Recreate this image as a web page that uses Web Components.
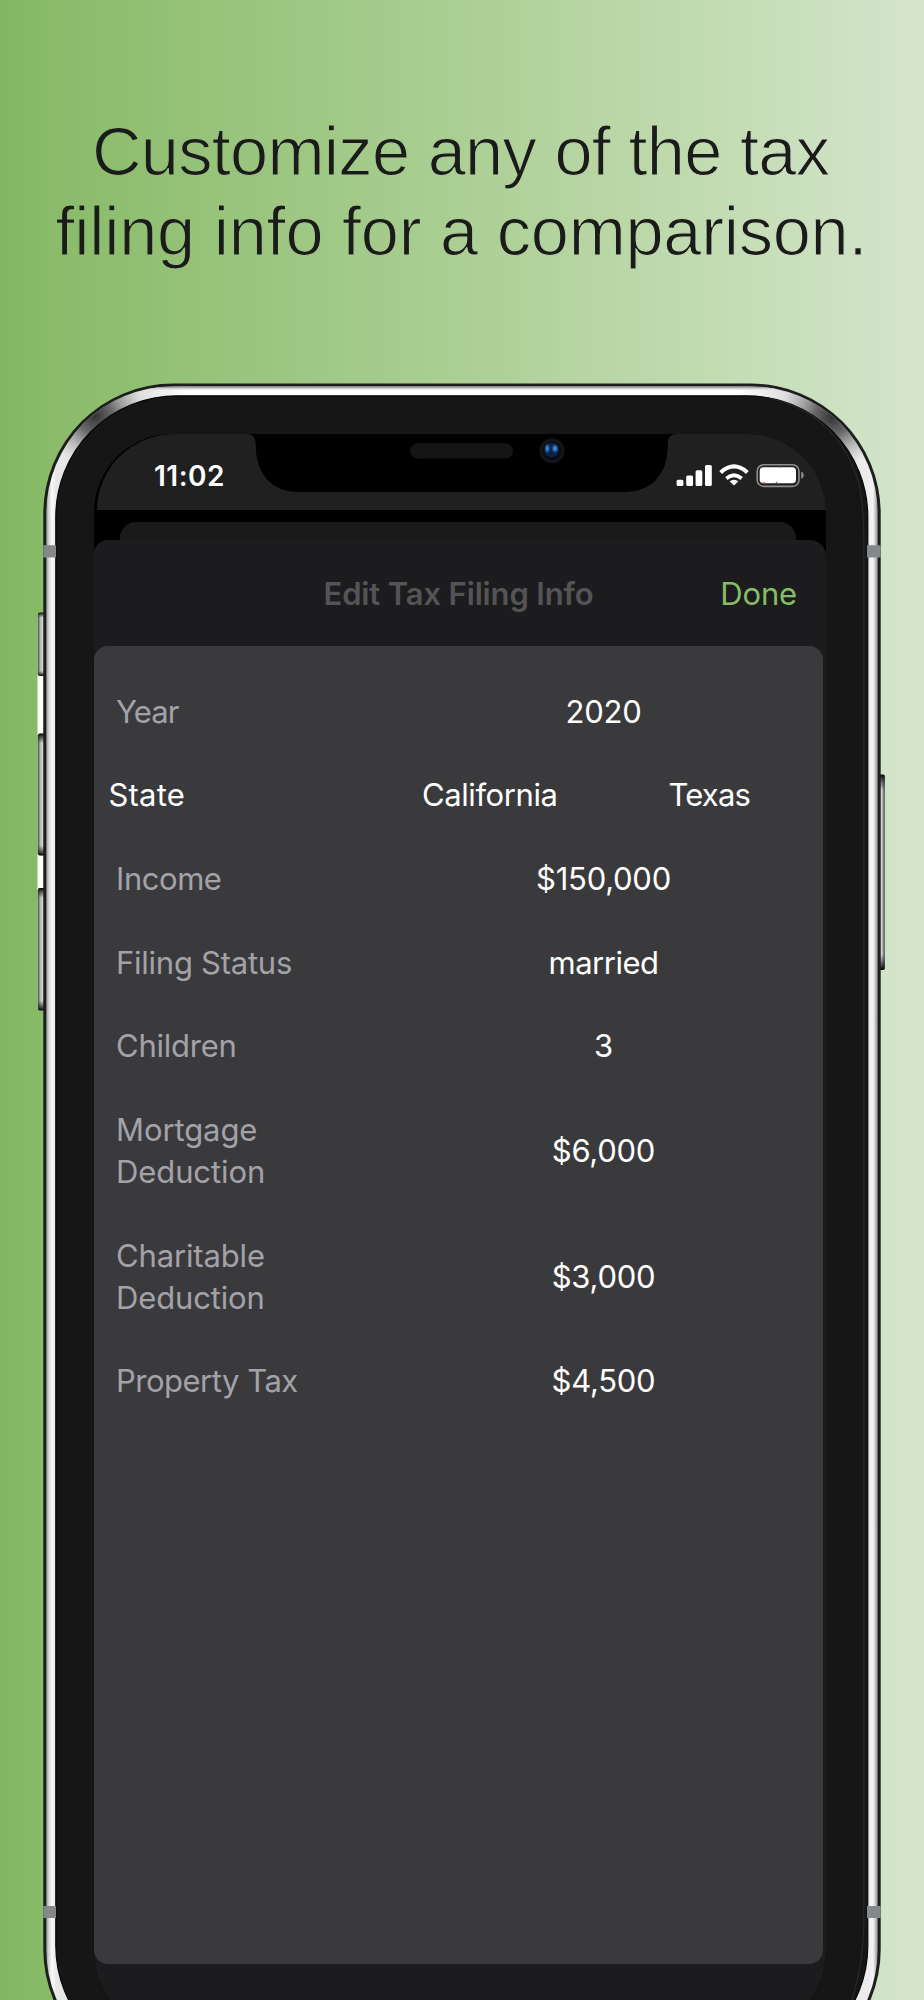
<!DOCTYPE html>
<html lang="en">
<head>
<meta charset="utf-8">
<title>Edit Tax Filing Info</title>
<style>
html,body{margin:0;padding:0}
body{width:924px;height:2000px;overflow:hidden;font-family:Inter,"Liberation Sans",sans-serif}
</style>
</head>
<body>
<promo-page>
  <promo-headline slot="headline"></promo-headline>
  <phone-frame>
    <status-bar time="11:02"></status-bar>
    <modal-sheet heading="Edit Tax Filing Info" action="Done">
      <info-row><span slot="label" style="letter-spacing:-.9px">Year</span><span>2020</span></info-row>
      <info-row strong><span slot="label" style="letter-spacing:.2px">State</span><span style="letter-spacing:-.4px">California</span><span style="letter-spacing:-.8px">Texas</span></info-row>
      <info-row><span slot="label" style="letter-spacing:-.45px">Income</span><span>$150,000</span></info-row>
      <info-row><span slot="label">Filing Status</span><span style="letter-spacing:-.5px">married</span></info-row>
      <info-row><span slot="label">Children</span><span>3</span></info-row>
      <info-row><span slot="label" style="letter-spacing:-.1px">Mortgage<br>Deduction</span><span>$6,000</span></info-row>
      <info-row><span slot="label" style="letter-spacing:-.15px">Charitable<br>Deduction</span><span>$3,000</span></info-row>
      <info-row><span slot="label" style="letter-spacing:-.5px">Property Tax</span><span>$4,500</span></info-row>
    </modal-sheet>
  </phone-frame>
</promo-page>

<script>
const define = (name, html, setup) => customElements.define(name, class extends HTMLElement {
  constructor() {
    super();
    this.attachShadow({mode: 'open'}).innerHTML = html;
  }
  connectedCallback() { if (setup) setup(this, this.shadowRoot); }
});

define('promo-page', `
<style>
:host{display:flex;flex-direction:column;width:924px;height:2000px;overflow:hidden;
 background:linear-gradient(90deg,#81b660 0%,#89bb69 5%,#abcf94 50%,#c5ddb5 80%,#d5e5cc 100%)}
</style>
<slot name="headline"></slot><slot></slot>`);

/* The outline uses the page gradient, which slims the letters to a light weight. */
define('promo-headline', `
<style>
:host{display:block;height:383px;flex:none}
svg{display:block}
text{font:400 68.500px "Liberation Sans",Arial,sans-serif;fill:#1b1b1b;stroke:url(#page);stroke-width:1.200}
</style>
<svg width="924" height="383">
 <defs><linearGradient id="page" gradientUnits="userSpaceOnUse" x1="0" y1="0" x2="924" y2="0">
  <stop offset="0" stop-color="#81b660"/><stop offset=".05" stop-color="#89bb69"/><stop offset=".5" stop-color="#abcf94"/><stop offset=".8" stop-color="#c5ddb5"/><stop offset="1" stop-color="#d5e5cc"/>
 </linearGradient></defs>
 <text x="92" y="174.500" textLength="738">Customize any of the tax</text>
 <text x="55.500" y="255" textLength="812">filing info for a comparison.</text>
</svg>`);

define('phone-frame', `
<style>
:host{display:flow-root;position:relative;height:1617px;flex:none}
.shell{position:absolute;left:0;top:0;display:block}
.screen{position:relative;margin:51px 0 0 94px;width:732px;height:1596px;border-radius:78px;background:#000;overflow:hidden;display:flex;flex-direction:column}
</style>
<svg class="shell" width="924" height="1617" viewBox="0 383 924 1617">
 <defs>
  <linearGradient id="metal" gradientUnits="userSpaceOnUse" x1="46" x2="878" y1="0" y2="0">
   <stop offset="0" stop-color="#8e8e8e"/><stop offset=".003" stop-color="#cfcfcf"/><stop offset=".007" stop-color="#fafafa"/><stop offset=".012" stop-color="#e8e8e8"/>
   <stop offset=".1" stop-color="#d8d8d8"/><stop offset=".17" stop-color="#fff"/><stop offset=".83" stop-color="#fff"/><stop offset=".9" stop-color="#d8d8d8"/>
   <stop offset=".989" stop-color="#ededed"/><stop offset=".994" stop-color="#f4f4f4"/><stop offset=".997" stop-color="#c4c4c4"/><stop offset="1" stop-color="#808080"/>
  </linearGradient>
  <linearGradient id="topline" x1="0" x2="0" y1="0" y2="1"><stop offset="0" stop-color="#777"/><stop offset=".5" stop-color="#d0d0d0"/><stop offset="1" stop-color="#d0d0d0" stop-opacity="0"/></linearGradient>
  <radialGradient id="shade"><stop offset="0" stop-color="#333"/><stop offset=".35" stop-color="#555" stop-opacity=".85"/><stop offset="1" stop-color="#999" stop-opacity="0"/></radialGradient>
  <linearGradient id="key" x1="0" x2="1" y1="0" y2="0"><stop offset="0" stop-color="#555"/><stop offset=".3" stop-color="#b5b5b5"/><stop offset=".6" stop-color="#d8d8d8"/><stop offset="1" stop-color="#444"/></linearGradient>
  <linearGradient id="ends" gradientUnits="objectBoundingBox" x1="0" x2="0" y1="0" y2="1"><stop offset="0" stop-color="#000"/><stop offset=".03" stop-color="#222" stop-opacity=".7"/><stop offset=".08" stop-color="#222" stop-opacity="0"/><stop offset=".92" stop-color="#222" stop-opacity="0"/><stop offset=".97" stop-color="#222" stop-opacity=".7"/><stop offset="1" stop-color="#000"/></linearGradient>
  <clipPath id="rim"><rect x="46.300" y="386.400" width="831.400" height="1690" rx="127"/></clipPath>
 </defs>
 <rect x="37.500" y="675" width="6" height="60" fill="#fff"/><rect x="37.500" y="854" width="6" height="36" fill="#fff"/>
 <g fill="url(#key)"><rect x="38" y="612.500" width="8" height="63.500" rx="2"/><rect x="38" y="733.500" width="8" height="122" rx="2"/><rect x="38" y="888" width="8" height="122.500" rx="2"/><rect x="877" y="774.500" width="7.800" height="195.500" rx="2"/></g>
 <g fill="url(#ends)"><rect x="38" y="612.500" width="8" height="63.500" rx="2"/><rect x="38" y="733.500" width="8" height="122" rx="2"/><rect x="38" y="888" width="8" height="122.500" rx="2"/><rect x="877" y="774.500" width="7.800" height="195.500" rx="2"/></g>
 <rect x="43.300" y="383.500" width="837.400" height="1696" rx="130" fill="#1c1f1c"/>
 <g clip-path="url(#rim)">
  <rect x="46" y="386" width="832" height="1692" fill="url(#metal)"/>
  <rect x="150" y="386.400" width="624" height="4" fill="url(#topline)"/>
  <circle cx="95" cy="416" r="50" fill="url(#shade)"/><circle cx="832" cy="417" r="52" fill="url(#shade)"/>
 </g>
 <rect x="55.800" y="395.800" width="812" height="1671" rx="121" fill="#161616" stroke="#070707" stroke-width="1.200"/>
 <path d="M770 398.500Q835 412 858 480Q863.800 500 863.800 540V1925Q863 1965 852 2000" fill="none" stroke="#292929" stroke-width="1.200"/>
 <g fill="#85888b"><rect x="43.300" y="545.200" width="12.700" height="12.300"/><rect x="867" y="545.200" width="13.700" height="12.300"/><rect x="43.300" y="1906" width="12.700" height="12"/><rect x="867" y="1906" width="13.700" height="12"/></g>
</svg>
<div class="screen"><slot></slot></div>`);

define('status-bar', `
<style>
:host{display:block;position:relative;margin-left:3px;height:75.500px;flex:none;background:#202020;border-radius:80px 77px 0 0/78px 78px 0 0}
svg{position:absolute;left:-3px;top:0;display:block}
.row{display:flex;padding:25px 0 0 57px;font:600 28px/34px Inter,sans-serif;letter-spacing:.5px;color:#fff;height:34px}
</style>
<svg width="732" height="76" viewBox="94 434 732 76">
 <defs><radialGradient id="ring"><stop offset="0" stop-color="#030712"/><stop offset=".6" stop-color="#080a10"/><stop offset=".85" stop-color="#15171a"/><stop offset="1" stop-color="#070707"/></radialGradient>
 <radialGradient id="glow"><stop offset="0" stop-color="#4a9be0"/><stop offset=".5" stop-color="#2468ae"/><stop offset="1" stop-color="#123666" stop-opacity="0"/></radialGradient></defs>
 <path d="M247 434C253 434.500 255.700 437 255.700 445C255.700 476 274 492 298 492H625C650 492 667.700 476 667.700 445C667.700 437 670.500 434.500 677 434Z" fill="#000"/>
 <rect x="410" y="443.300" width="103" height="15.200" rx="7.600" fill="#151515"/>
 <circle cx="552" cy="450.800" r="13" fill="url(#ring)"/>
 <circle cx="551.500" cy="450" r="7.300" fill="#0d2248"/>
 <ellipse cx="547.300" cy="448.500" rx="3" ry="5.500" fill="url(#glow)"/><ellipse cx="555" cy="448.500" rx="4" ry="5" fill="url(#glow)"/>
 <g fill="#fff">
  <rect x="676.600" y="479.700" width="6.800" height="6.300" rx="1.500"/><rect x="686.200" y="475.400" width="6.800" height="10.600" rx="1.500"/><rect x="695.600" y="470.200" width="6.700" height="15.800" rx="1.500"/><rect x="705" y="465" width="6.800" height="21" rx="1.500"/>
  <path d="M734 485.500L729.600 481.300Q734 478.300 738.400 481.300Z"/>
 </g>
 <path d="M726.300 478.400Q734 472.200 741.700 478.400" fill="none" stroke="#fff" stroke-width="3.800"/>
 <path d="M720.600 472.400Q734 460.400 747.400 472.400" fill="none" stroke="#fff" stroke-width="4"/>
 <rect x="757.200" y="464.700" width="41.800" height="21.700" rx="6.500" fill="none" stroke="#8d8b8b" stroke-width="1.600"/>
 <rect x="759.700" y="467.200" width="36.300" height="16" rx="3.800" fill="#fff"/>
 <path d="M779 467.400l1.500-1M775 483.700l2.500-2" stroke="#555" stroke-width="1"/><path d="M761 482.900h4.500" stroke="#c9664c"/>
 <path d="M801.200 471.400Q803.800 472.700 803.800 475.200T801.200 479Z" fill="#8d8b8b"/>
</svg>
<div class="row"><span id="t"></span></div>`, (el, root) => { root.getElementById('t').textContent = el.getAttribute('time'); });

define('modal-sheet', `
<style>
:host{display:flex;flex-direction:column;flex:1;padding-top:12px;font:400 31px/41.850px Inter,sans-serif;letter-spacing:-.25px}
.behind{height:18.500px;margin:0 30px 0 26px;background:#1a1a1a;border-radius:16px 16px 0 0;flex:none}
.sheet{flex:1;display:flex;flex-direction:column;background:#1c1c1e;border-radius:14px 16px 0 0}
header{height:106px;flex:none;display:grid;grid-template-columns:1fr auto 1fr;align-items:center;box-sizing:border-box;padding:1px 29px 0}
h1{grid-column:2;margin:0 3px 0 0;font-size:31px;font-weight:600;letter-spacing:-.15px;color:#545456}
button{grid-column:3;justify-self:end;font:inherit;letter-spacing:-.15px;background:none;border:0;padding:0;color:#86bd66}
.card{width:729px;height:1317.700px;box-sizing:border-box;flex:none;background:#3a3a3c;border-radius:14px;padding-top:23.600px}
</style>
<div class="behind"></div>
<div class="sheet"><header><h1></h1><button></button></header><div class="card"><slot></slot></div></div>`,
(el, root) => {
  root.querySelector('h1').textContent = el.getAttribute('heading');
  root.querySelector('button').textContent = el.getAttribute('action');
});

define('info-row', `
<style>
:host{display:grid;grid-template-columns:291px 1fr;align-items:center;padding:20.950px 0;color:#fff}
.label{padding-left:22px;color:#a3a2a9}
.values{display:flex;text-align:center;margin-right:1px}
.values ::slotted(span){flex:1 1 0;min-width:0}
:host([strong]) .label{color:#fff;padding-left:14.500px}
:host([strong]) .values{margin:0 4px 0 -5px}
</style>
<div class="label"><slot name="label"></slot></div><div class="values"><slot></slot></div>`);
</script>
</body>
</html>
